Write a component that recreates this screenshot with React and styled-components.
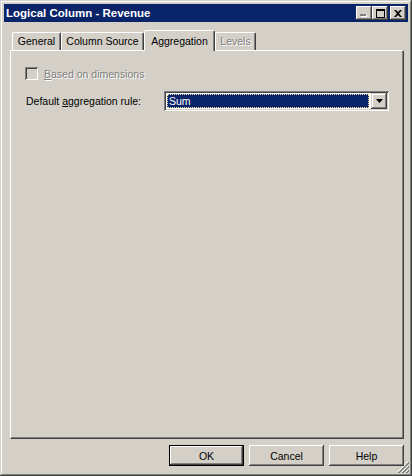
import React from 'react';
import styled, { createGlobalStyle } from 'styled-components';

const GlobalStyle = createGlobalStyle`
  html, body {
    margin: 0;
    padding: 0;
    background: #d4d0c8;
  }
  * {
    box-sizing: border-box;
  }
`;

const face = '#d4d0c8';
const shadow = '#808080';
const dark = '#404040';
const uiFont = '"Liberation Sans", Arial, sans-serif';

const Window = styled.div`
  position: relative;
  display: flex;
  flex-direction: column;
  width: 412px;
  height: 476px;
  padding: 4px;
  background: ${face};
  font-family: ${uiFont};
  font-size: 10.5px;
  color: #000;
  box-shadow: inset -1px -1px ${dark}, inset 1px 1px ${face},
    inset -2px -2px ${shadow}, inset 2px 2px #fff;
`;

const TitleBar = styled.div`
  display: flex;
  align-items: center;
  height: 18px;
  padding: 0 2px;
  background: #0a246a;
`;

const Title = styled.div`
  flex: 1;
  color: #fff;
  font-weight: bold;
  font-size: 11.5px;
  letter-spacing: 0;
  white-space: nowrap;
`;

const CaptionButton = styled.div`
  display: flex;
  align-items: center;
  justify-content: center;
  width: 16px;
  height: 14px;
  margin-left: ${p => p.$gap}px;
  background: ${face};
  box-shadow: inset -1px -1px ${dark}, inset 1px 1px #fff,
    inset -2px -2px ${shadow}, inset 2px 2px ${face};
`;

const Body = styled.div`
  flex: 1;
  display: flex;
  flex-direction: column;
  padding: 8px 4px 6px 6px;
`;

const TabStrip = styled.div`
  display: flex;
  align-items: flex-end;
  height: 20px;
  padding-left: 2px;
  position: relative;
  z-index: 2;
`;

const Tab = styled.div`
  display: flex;
  align-items: center;
  justify-content: center;
  width: ${p => p.$w}px;
  height: ${p => (p.$active ? 21 : 18)}px;
  margin-bottom: ${p => (p.$active ? -1 : 0)}px;
  padding-bottom: ${p => (p.$active ? 0 : 1)}px;
  background: ${face};
  border-top: 1px solid #fff;
  border-left: 1px solid #fff;
  border-right: 1px solid ${dark};
  border-radius: 2px 2px 0 0;
  box-shadow: inset -1px 0 ${shadow};
  white-space: nowrap;
  color: ${p => (p.$disabled ? shadow : '#000')};
  text-shadow: ${p => (p.$disabled ? '1px 1px #fff' : 'none')};
`;

const Panel = styled.div`
  flex: 1;
  display: flex;
  flex-direction: column;
  padding: 16px 14px;
  border-top: 1px solid #fff;
  border-left: 1px solid #fff;
  border-right: 1px solid ${dark};
  border-bottom: 1px solid ${dark};
  box-shadow: inset -1px -1px ${shadow};
`;

const CheckRow = styled.div`
  display: flex;
  align-items: center;
  height: 13px;
  gap: 6px;
`;

const CheckBox = styled.div`
  width: 13px;
  height: 13px;
  background: ${face};
  box-shadow: inset 1px 1px ${shadow}, inset -1px -1px #fff,
    inset 2px 2px ${dark}, inset -2px -2px ${face};
`;

const Label = styled.span`
  white-space: nowrap;
  color: ${p => (p.$disabled ? shadow : '#000')};
  text-shadow: ${p => (p.$disabled ? '1px 1px #fff' : 'none')};
`;

const Mnemonic = styled.span`
  text-decoration: underline;
  text-underline-offset: 1px;
`;

const FieldRow = styled.div`
  display: flex;
  align-items: center;
  margin-top: 11px;
`;

const FieldLabel = styled(Label)`
  width: 139px;
  padding-left: 1px;
`;

const Combo = styled.div`
  display: flex;
  align-items: stretch;
  width: 225px;
  height: 20px;
  padding: 2px;
  background: #fff;
  box-shadow: inset 1px 1px ${shadow}, inset -1px -1px #fff,
    inset 2px 2px ${dark}, inset -2px -2px ${face};
`;

const ComboValue = styled.div`
  flex: 1;
  display: flex;
  align-items: center;
  margin: 1px 2px 1px 1px;
  padding-left: 1px;
  background: #0a246a;
  border: 1px dotted #f3e3a0;
  color: #fff;
`;

const DropButton = styled.div`
  display: flex;
  align-items: center;
  justify-content: center;
  width: 16px;
  background: ${face};
  box-shadow: inset -1px -1px ${dark}, inset 1px 1px ${face},
    inset -2px -2px ${shadow}, inset 2px 2px #fff;
`;

const ButtonRow = styled.div`
  display: flex;
  justify-content: flex-end;
  gap: 5px;
  margin-top: 6px;
`;

const Button = styled.button`
  width: 75px;
  height: 21px;
  padding: 0;
  font-family: ${uiFont};
  font-size: 10.5px;
  color: #000;
  background: ${face};
  border: ${p => (p.$default ? '1px solid #000' : 'none')};
  box-shadow: inset -1px -1px ${dark}, inset 1px 1px #fff,
    inset -2px -2px ${shadow}, inset 2px 2px ${face};
`;

const Grip = styled.svg`
  position: absolute;
  right: 3px;
  bottom: 3px;
`;

const tabs = [
  { label: 'General', w: 49 },
  { label: 'Column Source', w: 83 },
  { label: 'Aggregation', w: 71, active: true },
  { label: 'Levels', w: 41, disabled: true },
];

export default function App() {
  return (
    <>
      <GlobalStyle />
      <Window>
        <TitleBar>
          <Title>Logical Column - Revenue</Title>
          <CaptionButton $gap={0}>
            <svg width="8" height="8" viewBox="0 0 8 8">
              <rect x="1" y="6" width="6" height="2" fill="#fff" />
              <rect x="0" y="5" width="6" height="2" fill={shadow} />
            </svg>
          </CaptionButton>
          <CaptionButton $gap={0}>
            <svg width="9" height="9" viewBox="0 0 9 9">
              <path d="M0 0h9v9H0z M1 2v6h7V2z" fill="#000" fillRule="evenodd" />
            </svg>
          </CaptionButton>
          <CaptionButton $gap={2}>
            <svg width="8" height="7" viewBox="0 0 8 7">
              <path d="M0 0h2l2 2 2-2h2L5 3.5 8 7H6L4 5 2 7H0l3-3.5z" fill="#000" />
            </svg>
          </CaptionButton>
        </TitleBar>

        <Body>
          <TabStrip>
            {tabs.map(t => (
              <Tab key={t.label} $w={t.w} $active={t.active} $disabled={t.disabled}>
                {t.label}
              </Tab>
            ))}
          </TabStrip>

          <Panel>
            <CheckRow>
              <CheckBox />
              <Label $disabled>
                <Mnemonic>B</Mnemonic>ased on dimensions
              </Label>
            </CheckRow>

            <FieldRow>
              <FieldLabel>
                Default <Mnemonic>a</Mnemonic>ggregation rule:
              </FieldLabel>
              <Combo>
                <ComboValue>Sum</ComboValue>
                <DropButton>
                  <svg width="7" height="4" viewBox="0 0 7 4">
                    <path d="M0 0h7L3.5 4z" fill="#000" />
                  </svg>
                </DropButton>
              </Combo>
            </FieldRow>
          </Panel>

          <ButtonRow>
            <Button $default>OK</Button>
            <Button>Cancel</Button>
            <Button>Help</Button>
          </ButtonRow>
        </Body>

        <Grip width="12" height="12" viewBox="0 0 12 12">
          <path d="M11 1L1 11 M11 5L5 11 M11 9L9 11" stroke="#fff" strokeWidth="1" />
          <path d="M12 1L1 12 M12 2L2 12 M12 5L5 12 M12 6L6 12 M12 9L9 12 M12 10L10 12" stroke={shadow} strokeWidth="1" />
        </Grip>
      </Window>
    </>
  );
}
